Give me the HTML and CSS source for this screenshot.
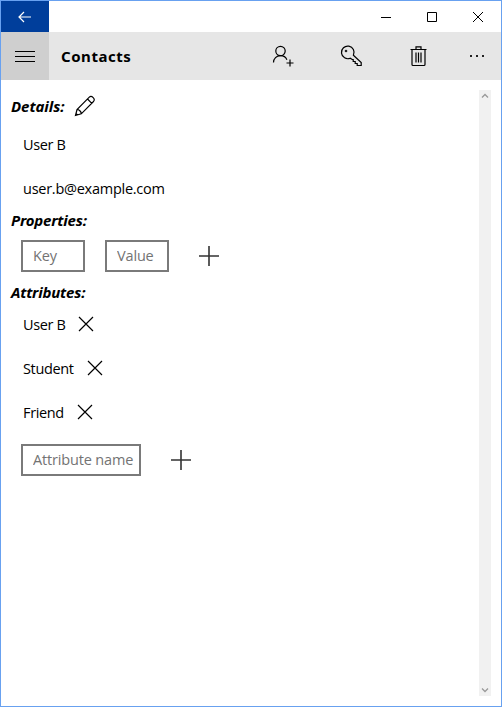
FILE: index.html
```html
<!DOCTYPE html>
<html lang="en">
<head>
<meta charset="utf-8">
<title>Contacts</title>
<link rel="stylesheet" href="styles.css">
</head>
<body>
<div class="window">
  <div class="titlebar">
    <button class="back" aria-label="Back"><svg width="14" height="12" viewBox="0 0 14 12"><path d="M13 6H1M6 1L1 6l5 5"/></svg></button>
    <div class="controls">
      <button aria-label="Minimize"><svg width="12" height="12"><path d="M1 6.5h10"/></svg></button>
      <button aria-label="Maximize"><svg width="12" height="12"><path d="M1.5 1.5h9v9h-9z"/></svg></button>
      <button aria-label="Close"><svg width="12" height="12"><path d="M1 1l10 10M11 1L1 11"/></svg></button>
    </div>
  </div>
  <header class="toolbar">
    <button class="menu" aria-label="Menu"><svg width="20" height="12"><path d="M0 1.500h20M0 6.500h20M0 11.500h20"/></svg></button>
    <h1>Contacts</h1>
    <nav class="actions">
      <button aria-label="Add contact"><svg width="24" height="24" viewBox="0 0 24 24"><circle cx="9.5" cy="7" r="4.7"/><path d="M2.5 18.5c0-4 3-6.8 7-6.8 2.900 0 5.300 1.400 6.400 4M15.500 19h7M19 15.500v7"/></svg></button>
      <button aria-label="Key"><svg width="24" height="24" viewBox="0 0 24 24"><path d="M14.400 11.200L22.200 18.500V21.500H18.200V19.500H16.200V17.500H14.200V15.500H13.200L11.200 14.200A6.300 6.300 0 1 1 14.400 11.200Z"/><circle cx="7" cy="7" r="1.300" class="dot"/></svg></button>
      <button aria-label="Delete"><svg width="24" height="24" viewBox="0 0 24 24"><path d="M3.500 5.500h16M9 5V2.800h5V5M5 6v14.500a1 1 0 0 0 1 1h11a1 1 0 0 0 1-1V6M9 8.500v10M11.500 8.500v10M14 8.500v10"/></svg></button>
      <button class="more" aria-label="More"><svg width="16" height="2"><path class="dot" d="M1 0h2v2H1zM7 0h2v2H7zM13 0h2v2h-2z"/></svg></button>
    </nav>
  </header>
  <main class="content">
    <div class="page">
      <div class="heading details"><h2>Details:</h2><button aria-label="Edit"><svg width="22" height="22" viewBox="0 0 22 22"><path d="M1.500 20.500L3 14.500 15.300 2.200C17.500 0 22 4 19.500 6.500L7.300 18.800ZM3 14.500c2 0 4.200 2 4.300 4.300M13.500 4l4.300 4.300M2 18.500l1.500 1.500"/></svg></button></div>
      <div class="row"><span class="user">User B</span></div>
      <div class="row"><span class="email">user.b@example.com</span></div>
      <div class="heading"><h2>Properties:</h2></div>
      <div class="fields">
        <input class="short" placeholder="Key"><input class="short" placeholder="Value">
        <button class="add" aria-label="Add property"><svg width="20" height="20"><path d="M0 10h20M10 0v20"/></svg></button>
      </div>
      <div class="heading"><h2>Attributes:</h2></div>
      <div class="row"><span class="user">User B</span><button aria-label="Remove"><svg width="16" height="16"><path d="M1 1l14 14M15 1L1 15"/></svg></button></div>
      <div class="row"><span class="student">Student</span><button aria-label="Remove"><svg width="16" height="16"><path d="M1 1l14 14M15 1L1 15"/></svg></button></div>
      <div class="row"><span class="friend">Friend</span><button aria-label="Remove"><svg width="16" height="16"><path d="M1 1l14 14M15 1L1 15"/></svg></button></div>
      <div class="fields">
        <input class="long" placeholder="Attribute name">
        <button class="add" aria-label="Add attribute"><svg width="20" height="20"><path d="M0 10h20M10 0v20"/></svg></button>
      </div>
    </div>
    <div class="scrollbar">
      <svg width="8" height="6"><path d="M1 4.500l3-3 3 3"/></svg>
      <svg width="8" height="6"><path d="M1 1.500l3 3 3-3"/></svg>
    </div>
  </main>
</div>
</body>
</html>
```
FILE: styles.css
```css
* { box-sizing: border-box; }
body { margin: 0; font: 14.5px/20px "Open Sans", "Noto Sans", sans-serif; letter-spacing: -.35px; color: #000; }
button { padding: 0; border: 0; background: none; display: flex; align-items: center; justify-content: center; }
svg { display: block; fill: none; stroke: #000; stroke-width: 1.2; flex: none; }
.dot { fill: #222; stroke: none; }
h1, h2 { margin: 0; font-weight: 700; white-space: nowrap; }
.window { width: 502px; height: 707px; border: 1px solid #68a1f0; background: #fff; display: flex; flex-direction: column; overflow: hidden; }
.titlebar { height: 31px; display: flex; justify-content: space-between; flex: none; }
.back { width: 48px; height: 31px; background: #003e9b; }
.back svg { stroke: #fff; }
.controls { display: flex; }
.controls button { width: 46px; }
.controls svg { stroke-width: 1; }
.toolbar { height: 48px; flex: none; background: #e6e6e6; display: flex; align-items: center; }
.menu { width: 48px; height: 48px; background: #cfcfcf; }
.menu svg { stroke-width: 1; }
h1 { font-family: "Noto Sans", sans-serif; font-size: 15px; letter-spacing: .55px; margin-left: 12px; }
.actions { display: flex; margin-left: auto; height: 48px; }
.actions button { width: 68px; }
.actions .more { width: 48px; }
.content { flex: 1; display: flex; justify-content: space-between; padding: 10px; min-height: 0; }
.page { display: flex; flex-direction: column; }
.heading { height: 20px; display: flex; align-items: center; flex: none; padding-bottom: 2px; }
.details { height: 33px; gap: 9px; }
.details h2 { width: 54px; letter-spacing: -.05px; }
h2 { font-family: "Noto Sans", sans-serif; font-size: 15px; font-style: italic; letter-spacing: -.2px; }
.row { height: 44px; flex: none; display: flex; align-items: center; gap: 12px; padding: 0 0 2px 12px; }
.row span { white-space: nowrap; position: relative; top: 1px; }
.user { width: 43px; }
.student { width: 52px; }
.friend { width: 42px; }
.email { letter-spacing: -.26px; }
.fields { height: 52px; display: flex; align-items: center; padding: 0 0 2px 10px; }
input { height: 32px; border: 2px solid #7a7a7a; border-radius: 0; padding: 0 0 2px 10px; font: inherit; letter-spacing: -.16px; background: #fff; outline: 0; }
input::placeholder { color: #737373; opacity: 1; }
.short { width: 64px; margin-right: 20px; }
.long { width: 120px; margin-right: 20px; }
.add { margin-left: 10px; }
.add svg { stroke: #333; stroke-width: 1.6; }
.scrollbar { width: 12px; background: #f1f1f1; display: flex; flex-direction: column; justify-content: space-between; align-items: center; padding: 3px 0; }
.scrollbar svg { stroke: #999; stroke-width: 1.300; }
```
